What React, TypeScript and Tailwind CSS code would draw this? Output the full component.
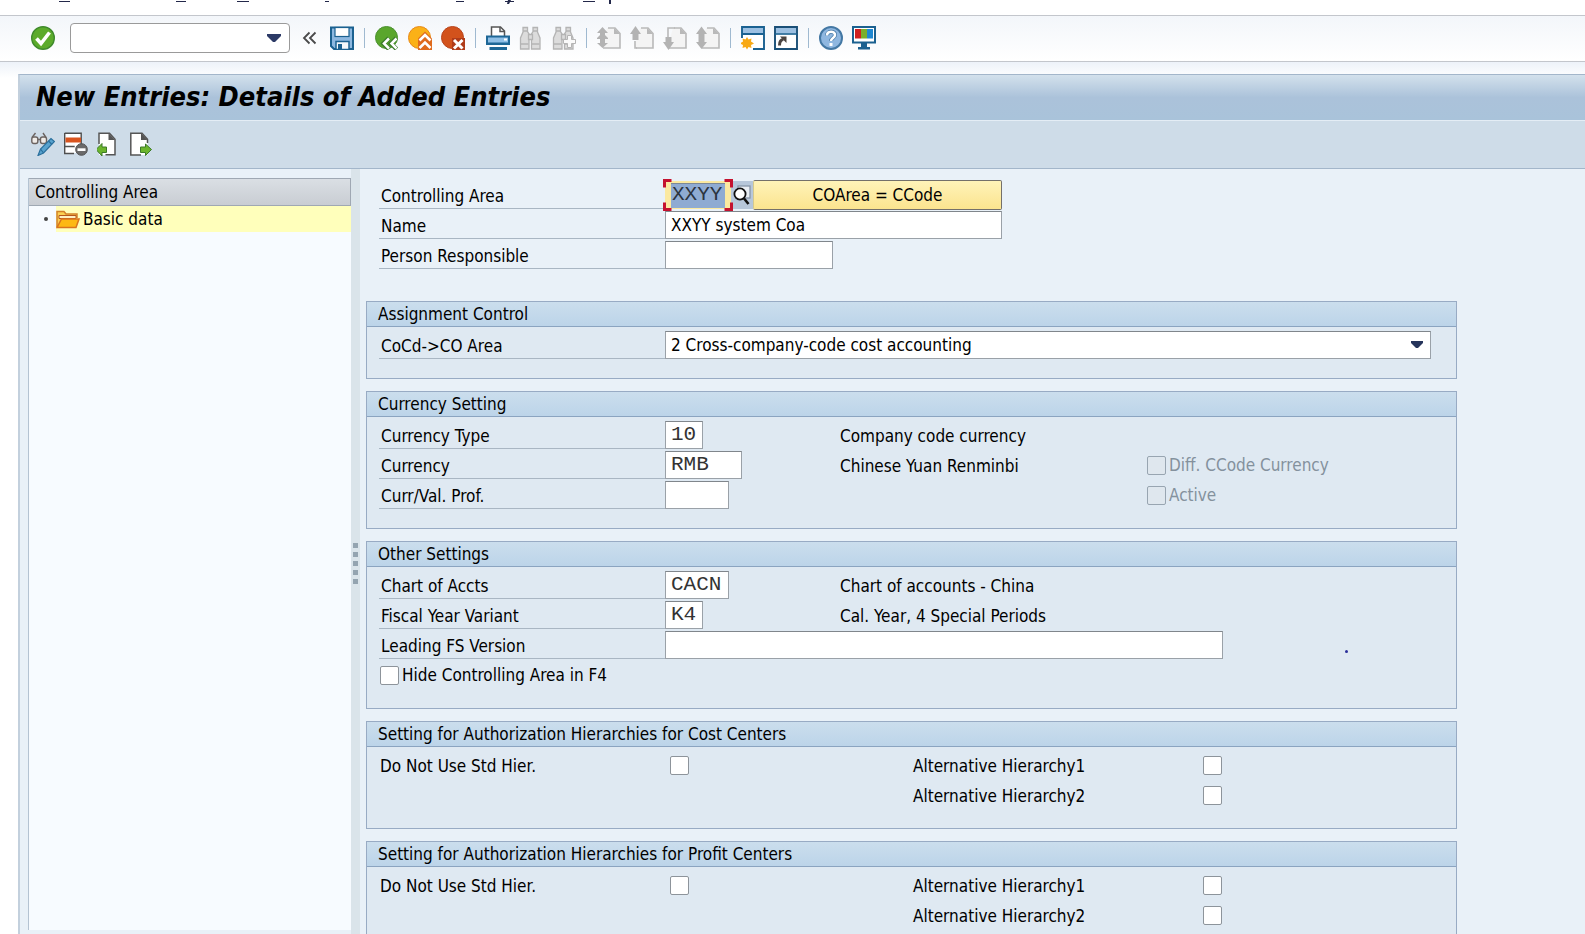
import React, { useId } from "react";

type IconProps = { children: React.ReactNode; className?: string };

function Icon({ children, className = "size-6" }: IconProps) {
  return (
    <svg viewBox="0 0 24 24" className={className} aria-hidden="true">
      {children}
    </svg>
  );
}

function ToolButton({ label, disabled, children }: { label: string; disabled?: boolean; children: React.ReactNode }) {
  return (
    <button type="button" aria-label={label} disabled={disabled} className="size-6 shrink-0">
      <Icon>{children}</Icon>
    </button>
  );
}

function Separator() {
  return <span className="mx-px h-5 w-px shrink-0 bg-[#9fb9d0]" />;
}

function MenuEdge() {
  return (
    <svg className="h-4 w-full shrink-0 border-b border-[#c3c6cc] bg-white" aria-hidden="true">
      <g fill="#23284a">
        <rect x="59" y="1" width="11" height="1" />
        <rect x="176" y="1" width="10" height="1" />
        <rect x="237" y="1" width="12" height="1" />
        <rect x="325" y="1" width="4" height="1" />
        <rect x="456" y="1" width="8" height="1" />
        <rect x="505" y="1" width="9" height="1" />
        <path d="M508 0h3l-2 4h-2z" />
        <rect x="583" y="1" width="12" height="1" />
        <rect x="609" y="0" width="2" height="4" />
      </g>
    </svg>
  );
}

function Binoculars() {
  return (
    <g fill="#dcdcdc" stroke="#b4b4b4" strokeWidth="1.3">
      <path d="M4 1.500h4.500v4L10 8v15H1.500V12L4 6z" />
      <path d="M14 1.500h4.500V6L21 12v11h-8.500V8L14 5.500z" />
      <path d="M9.500 8.500h4v5h-4zM4 5h4.500M14 5h4.500M2 18h7.500M13 18h7.500" />
    </g>
  );
}

function PageShape() {
  return (
    <g>
      <path d="M10 2h8l5 5v15H5v-3" fill="#f4f4f4" stroke="none" />
      <path d="M11 2h7l5 5.500v14.500H6" fill="none" stroke="#b9b9b9" strokeWidth="1.600" />
      <path d="M17 2v6h6z" fill="#b9b9b9" />
    </g>
  );
}

const arrowFill = "#b3b3b3";

function CommandBar() {
  return (
    <div className="flex h-[46px] shrink-0 items-center gap-[9px] border-b border-[#c3c6cc] bg-linear-to-b from-[#f3f6fa] to-white pb-0.5 pl-[31px]">
      <ToolButton label="Enter">
        <circle cx="12" cy="12" r="11.300" fill="#5cab2b" stroke="#3f8a2c" strokeWidth="1.400" />
        <path d="M5.500 12.500l4.500 5 8.500-11" fill="none" stroke="#fff" strokeWidth="3.600" />
      </ToolButton>
      <div className="ml-1.5 flex h-[30px] w-[220px] shrink-0 items-center rounded-sm border border-[#9a9a9a] bg-white pr-2">
        <input aria-label="Command field" className="h-full min-w-0 flex-1 px-1.5 outline-none" />
        <button type="button" aria-label="Command history" className="h-full">
          <svg viewBox="0 0 14 8" className="h-2 w-3.5" aria-hidden="true">
            <path d="M0 0h14v2L8 8H6L0 2z" fill="#2c3a66" />
          </svg>
        </button>
      </div>
      <button type="button" aria-label="Hide command field" className="mr-1 ml-[3px] h-6 w-[15px] shrink-0">
        <svg viewBox="0 0 15 24" className="h-6 w-[15px]" aria-hidden="true">
          <path d="M7.500 6.500L2 12l5.500 5.500M13.500 6.500L8 12l5.500 5.500" fill="none" stroke="#4a4a4a" strokeWidth="1.800" />
        </svg>
      </button>
      <ToolButton label="Save">
        <path d="M1 1.500h22v21.500H4L1 20z" fill="#8db8e0" stroke="#1b6190" strokeWidth="2" />
        <rect x="5" y="1.500" width="14" height="9" fill="#fff" stroke="#1b6190" strokeWidth="1.200" />
        <rect x="6" y="15.500" width="13" height="8" fill="#f4f8fb" stroke="#1b6190" strokeWidth="1.500" />
        <rect x="8" y="18" width="4" height="5" fill="#1b6190" />
      </ToolButton>
      <Separator />
      <ToolButton label="Back">
        <circle cx="11.500" cy="11.500" r="11" fill="#5aa62c" stroke="#4b9030" />
        <path d="M14 12l-5.500 5.500L14 23M21.500 12L16 17.500l5.500 5.500" fill="none" stroke="#3b7a2a" strokeWidth="4.500" />
        <path d="M14 12.500l-5 5 5 5M21.500 12.500l-5 5 5 5" fill="none" stroke="#fff" strokeWidth="2.500" />
      </ToolButton>
      <ToolButton label="Exit">
        <circle cx="11.500" cy="11.500" r="11" fill="#fbb117" stroke="#e8891b" />
        <path d="M17 5.500l7 7V24H10V12.500z" fill="#df6a1d" />
        <path d="M11.500 14.500l5.500-5.500 5.500 5.500M11.500 22l5.500-5.500 5.500 5.500" fill="none" stroke="#fff" strokeWidth="2.600" />
      </ToolButton>
      <ToolButton label="Cancel">
        <circle cx="11.500" cy="11.500" r="11" fill="#d2521c" stroke="#b8441c" />
        <path d="M11 12h13v12H11z" fill="#b03c19" />
        <path d="M13 14l8.500 8.500M21.500 14L13 22.500" fill="none" stroke="#fff" strokeWidth="3" />
      </ToolButton>
      <Separator />
      <ToolButton label="Print">
        <path d="M5.500 11V1h9l4 4v6" fill="#fff" stroke="#555" strokeWidth="1.500" />
        <path d="M14 1v4.500h4.500" fill="none" stroke="#555" strokeWidth="1.500" />
        <path d="M1 10.500h22v7H1z" fill="#8fbfe6" stroke="#1e6796" strokeWidth="2" />
        <rect x="18" y="12.500" width="3" height="2" fill="#fff" />
        <path d="M0 18h24v1H0zM3.500 21h17.500v3H3.500z" fill="#1e6796" />
      </ToolButton>
      <ToolButton label="Find" disabled>
        <Binoculars />
      </ToolButton>
      <ToolButton label="Find next" disabled>
        <Binoculars />
        <path d="M15.500 9.500h4v4h4v4h-4v4h-4v-4h-4v-4h4z" fill="#fafafa" stroke="#b4b4b4" strokeWidth="1" />
      </ToolButton>
      <Separator />
      <ToolButton label="First page" disabled>
        <PageShape />
        <path d="M0 7l5.500-6L11 7H8v3H3V7zM0 12l5.500-5.500L11 12v1H0zM0 17l5.500 5 5.500-5H8v-4H3v4z" fill={arrowFill} />
      </ToolButton>
      <ToolButton label="Previous page" disabled>
        <PageShape />
        <path d="M5 15v7h2" stroke="#b9b9b9" strokeWidth="1.600" fill="none" />
        <path d="M0 8l5.500-8L11 8H8.500v6h-6V8z" fill={arrowFill} />
      </ToolButton>
      <ToolButton label="Next page" disabled>
        <PageShape />
        <path d="M5 12V2h7" stroke="#b9b9b9" strokeWidth="1.600" fill="none" />
        <path d="M0 16h2.500v-5h6v5H11l-5.500 8z" fill={arrowFill} />
      </ToolButton>
      <ToolButton label="Last page" disabled>
        <PageShape />
        <path d="M0 8l5.500-7.500L11 8H8.500v8H11l-5.500 7L0 16h2.500V8z" fill={arrowFill} />
      </ToolButton>
      <Separator />
      <ToolButton label="New session">
        <path d="M1 1h22v22H1z" fill="#fff" />
        <path d="M1 1h22v7H1z" fill="#9cc0e2" />
        <path d="M1 12V1h22v22H12M1 8h22" fill="none" stroke="#1a6191" strokeWidth="1.900" />
        <path d="M6 11l1.500 2.500L10.500 12.500l-.5 3 3 2-3 1.500.5 3-3-1L6 23.500 4.500 21l-3 1 .5-3-3-1.500 3-2-.5-3 3 1z" fill="#f8a915" />
      </ToolButton>
      <ToolButton label="Create shortcut">
        <path d="M1 1h22v22H1z" fill="#fff" stroke="#1a4f77" strokeWidth="1.900" />
        <path d="M2 2h20v5.500H2z" fill="#9cc0e2" />
        <path d="M1 8h22" stroke="#1a6191" strokeWidth="1.600" />
        <path d="M5.500 19.500c0-4 1.500-6 4-6" fill="none" stroke="#4b4441" strokeWidth="3" />
        <path d="M6 10.500h6.500V17z" fill="#4b4441" />
      </ToolButton>
      <Separator />
      <ToolButton label="Help">
        <circle cx="12" cy="12" r="11" fill="#8fb7e0" stroke="#4478a4" strokeWidth="2" />
        <path d="M8 9.500C8 4.500 16 4.500 16 9c0 3-4 3-4 6" fill="none" stroke="#4478a4" strokeWidth="4" />
        <path d="M8 9.500C8 4.500 16 4.500 16 9c0 3-4 3-4 6" fill="none" stroke="#fff" strokeWidth="2.600" />
        <rect x="10.500" y="17" width="3" height="3" fill="#fff" />
      </ToolButton>
      <ToolButton label="Customize local layout">
        <rect x="1" y="1" width="22" height="15.500" fill="#fff" stroke="#1b6190" strokeWidth="2" />
        <rect x="3" y="3" width="6" height="9.500" fill="#cf2020" />
        <rect x="9" y="3" width="6" height="9.500" fill="#7aae2c" />
        <rect x="15" y="3" width="6" height="9.500" fill="#1e88d2" />
        <path d="M9 17h6v4h3v2.500H6V21h3z" fill="#1b6190" />
      </ToolButton>
    </div>
  );
}

function ApplicationBar() {
  return (
    <div className="flex h-12 shrink-0 items-center gap-[9px] border-b border-[#a3b6ca] bg-[#cedce8] pb-0.5 pl-[11px]">
      <ToolButton label="Display or change">
        <g fill="none" stroke="#6b6360" strokeWidth="1.400">
          <rect x="0.800" y="5" width="6" height="6.500" rx="2" fill="#f0ece8" />
          <rect x="9.500" y="5" width="6" height="6.500" rx="2" fill="#f0ece8" />
          <path d="M6.800 7.500h2.700M1 5.500L4.500 1M15 5.500L12 1" />
        </g>
        <path d="M7 23.500l2.500-6.500L20 6.500l3.500 3L12.500 21z" fill="#58a3cf" stroke="#2a6f9c" strokeWidth="1.200" />
        <path d="M9.500 17l3 4M17.500 9l3.500 3.500" stroke="#2a6f9c" strokeWidth="1.200" />
      </ToolButton>
      <ToolButton label="Delete">
        <path d="M0 1h17v20H0z" fill="#fff" />
        <path d="M.7 1v20.500h9.300M.7 1.200h16.500v14M.7 14.500h10" fill="none" stroke="#4f4f4f" strokeWidth="1.400" />
        <path d="M1.500 5.500h15.500v5H1.500z" fill="#d9541e" />
        <circle cx="17.500" cy="17.500" r="5.800" fill="#6a6a6a" stroke="#505050" />
        <rect x="13.500" y="16.300" width="8" height="2.700" fill="#fff" />
      </ToolButton>
      <ToolButton label="Previous entry">
        <path d="M2 1.500h10l6 5.500v16H2z" fill="#fff" />
        <path d="M2 12V1.200h10.500l5.500 6v15.500h-9.500" fill="none" stroke="#555" strokeWidth="1.500" />
        <path d="M11.500 1v7H18z" fill="#555" />
        <path d="M-1 17.500L5 11.500v3.500h4.500v5.500H5v3.500z" fill="#6cb52d" stroke="#3c7a28" strokeWidth="1" />
      </ToolButton>
      <ToolButton label="Next entry">
        <path d="M.8 1.200h11.200l5.500 6V23H.8z" fill="#fff" />
        <path d="M17.500 11V7.200L12 1.200H.8V23H11" fill="none" stroke="#555" strokeWidth="1.500" />
        <path d="M11 1v7h6.500z" fill="#555" />
        <path d="M21.500 17.500L15.500 12v3h-5v5.500h5v3z" fill="#6cb52d" stroke="#3c7a28" strokeWidth="1" />
      </ToolButton>
    </div>
  );
}

function NavigationTree() {
  return (
    <nav className="mt-[9px] mb-1 ml-2 flex w-[323px] shrink-0 flex-col border-l border-[#b4c3d2] bg-[#f7fbff]">
      <h2 className="flex h-7 shrink-0 items-center border border-l-0 border-[#9fa8b3] bg-linear-to-b from-[#dadfe4] to-[#c9cdd3] pl-1.5">
        Controlling Area
      </h2>
      <ul>
        <li className="flex h-[26px] items-center">
          <span className="ml-[15px] size-1 rounded-full bg-[#444]" />
          <a href="#basic-data" className="ml-2 flex h-full flex-1 items-center gap-[3px] bg-[#ffffbb]">
            <svg viewBox="0 0 24 19" className="h-[19px] w-6" aria-hidden="true">
              <path d="M1 17V1.500h7l2 2.500h11v4" fill="#fbd052" stroke="#d2812a" strokeWidth="1.500" />
              <path d="M3 5.500h17v3H3z" fill="#fff0c0" stroke="#b5561c" strokeWidth="1" />
              <path d="M1 17.500L5.500 9H23l-3 8.500z" fill="#fdb813" stroke="#d9731f" strokeWidth="1.500" />
            </svg>
            Basic data
          </a>
        </li>
      </ul>
    </nav>
  );
}

function Splitter() {
  return (
    <div className="flex w-[9px] shrink-0 flex-col items-center justify-center gap-1 bg-[#dae4ea] pt-6">
      <span className="size-[5px] bg-[#94a4b0]" />
      <span className="size-[5px] bg-[#94a4b0]" />
      <span className="size-[5px] bg-[#94a4b0]" />
      <span className="size-[5px] bg-[#94a4b0]" />
      <span className="size-[5px] bg-[#94a4b0]" />
    </div>
  );
}

const boxBase = "h-7 max-w-full border border-[#9aa1a8] border-t-[#80868c] bg-white px-[5px] outline-none";
const monoText = "pb-0.5 font-['Liberation_Mono',monospace] text-[21px] text-[#333]";

type FieldProps = {
  label: string;
  children: (id: string) => React.ReactNode;
  description?: string;
  extra?: React.ReactNode;
};

function Field({ label, children, description, extra }: FieldProps) {
  const id = useId();
  return (
    <div className="flex h-[30px] items-end">
      <label htmlFor={id} className="flex h-7 w-[286px] shrink-0 items-center border-b border-[#a9b6c3] pt-0.5 pl-0.5">
        {label}
      </label>
      {description === undefined ? (
        children(id)
      ) : (
        <>
          <div className="flex w-[175px] shrink-0">{children(id)}</div>
          <span className="flex h-7 w-[307px] shrink-0 items-center pt-px">{description}</span>
        </>
      )}
      {extra}
    </div>
  );
}

function Checkbox({ id, disabled }: { id?: string; disabled?: boolean }) {
  return (
    <input
      id={id}
      type="checkbox"
      disabled={disabled}
      className="size-[19px] shrink-0 appearance-none rounded-xs border border-[#8d949b] bg-white checked:bg-[#4478a4] disabled:border-[#98a5b1] disabled:bg-[#dfe7ee]"
    />
  );
}

function TickRow({ label, disabled }: { label: string; disabled?: boolean }) {
  return (
    <label className={disabled ? "flex h-7 items-center gap-[3px] text-[#84919d]" : "flex h-7 items-center gap-[3px]"}>
      <Checkbox disabled={disabled} />
      {label}
    </label>
  );
}

function Group({ title, children }: { title: string; children: React.ReactNode }) {
  return (
    <section className="mb-3 border border-[#98abc4] bg-[#dfe9f2]">
      <h3 className="flex h-[25px] items-center border-b border-[#8ba4c0] bg-linear-to-b from-[#cbdeed] to-[#bcd4e9] pl-[11px]">
        {title}
      </h3>
      <div className="pt-0.5 pr-[25px] pb-[19px] pl-3">{children}</div>
    </section>
  );
}

function HierarchyGroup({ title }: { title: string }) {
  const id = useId();
  return (
    <Group title={title}>
      <div className="grid grid-cols-[291px_242px_291px_auto] justify-start">
        <label htmlFor={id + "std"} className="flex h-[30px] items-center pt-[3px] pl-px">Do Not Use Std Hier.</label>
        <span className="flex h-[30px] items-center pt-0.5"><Checkbox id={id + "std"} /></span>
        <label htmlFor={id + "a"} className="flex h-[30px] items-center pt-[3px] pl-px">Alternative Hierarchy1</label>
        <span className="flex h-[30px] items-center pt-0.5"><Checkbox id={id + "a"} /></span>
        <label htmlFor={id + "b"} className="col-start-3 flex h-[30px] items-center pt-[3px] pl-px">Alternative Hierarchy2</label>
        <span className="flex h-[30px] items-center pt-0.5"><Checkbox id={id + "b"} /></span>
      </div>
    </Group>
  );
}

function KeyField({ id }: { id: string }) {
  return (
    <div className="relative flex h-7 w-[66px] shrink-0 items-center justify-center bg-[#fbe9a0]">
      <input
        id={id}
        defaultValue="XXYY"
        className="h-[25px] w-[54px] border-t border-[#7c8896] bg-[#8fabd2] px-px pb-0.5 font-['Liberation_Mono',monospace] text-[21px] text-[#2b3440] outline-none"
      />
      <svg viewBox="0 0 70 32" className="pointer-events-none absolute -top-0.5 -left-0.5 h-8 w-[70px]" aria-hidden="true">
        <path d="M1.500 8.500v-7h7M61.500 1.500h7v7M68.500 23.500v7h-7M8.500 30.500h-7v-7" fill="none" stroke="#c4122f" strokeWidth="3" />
      </svg>
    </div>
  );
}

function EntryForm() {
  return (
    <form className="min-w-0 flex-1 pt-2.5 pr-32 pl-1.5">
      <div className="mb-8 pl-[13px]">
        <Field label="Controlling Area">
          {(id) => (
            <>
              <KeyField id={id} />
              <button type="button" aria-label="Search help" className="flex h-7 w-[22px] shrink-0 items-center justify-center bg-[#b7c7da]">
                <svg viewBox="0 0 20 22" className="h-[22px] w-5" aria-hidden="true">
                  <rect x="6" y="2" width="12" height="12" fill="#e9eef4" stroke="#8796a8" strokeWidth="1.300" />
                  <circle cx="8" cy="10" r="5.600" fill="#fff" stroke="#111" strokeWidth="1.800" />
                  <path d="M12 14.500l4.500 5.500" stroke="#111" strokeWidth="2.600" />
                </svg>
              </button>
              <button
                type="button"
                className="-mb-px h-[30px] w-[249px] rounded-xs border border-[#74706a] border-l-[#d6c98c] bg-linear-to-b from-[#fff3b8] to-[#fbe48f]"
              >
                COArea = CCode
              </button>
            </>
          )}
        </Field>
        <Field label="Name">
          {(id) => <input id={id} defaultValue="XXYY system Coa" className={`${boxBase} w-[337px]`} />}
        </Field>
        <Field label="Person Responsible">
          {(id) => <input id={id} className={`${boxBase} w-[168px]`} />}
        </Field>
      </div>

      <Group title="Assignment Control">
        <Field label="CoCd->CO Area">
          {(id) => (
            <div className="relative w-[766px] max-w-full">
              <select id={id} className={`${boxBase} block w-full appearance-none`}>
                <option>2 Cross-company-code cost accounting</option>
              </select>
              <svg viewBox="0 0 12 7" className="pointer-events-none absolute top-2.5 right-2 h-[7px] w-3" aria-hidden="true">
                <path d="M0 0h12v2L7 7H5L0 2z" fill="#26355c" />
              </svg>
            </div>
          )}
        </Field>
      </Group>

      <Group title="Currency Setting">
        <Field label="Currency Type" description="Company code currency">
          {(id) => <input id={id} defaultValue="10" className={`${boxBase} ${monoText} w-[38px]`} />}
        </Field>
        <Field
          label="Currency"
          description="Chinese Yuan Renminbi"
          extra={<TickRow label="Diff. CCode Currency" disabled />}
        >
          {(id) => <input id={id} defaultValue="RMB" className={`${boxBase} ${monoText} w-[77px]`} />}
        </Field>
        <Field label="Curr/Val. Prof." description="" extra={<TickRow label="Active" disabled />}>
          {(id) => <input id={id} className={`${boxBase} ${monoText} w-16`} />}
        </Field>
      </Group>

      <Group title="Other Settings">
        <Field label="Chart of Accts" description="Chart of accounts - China">
          {(id) => <input id={id} defaultValue="CACN" className={`${boxBase} ${monoText} w-16`} />}
        </Field>
        <Field label="Fiscal Year Variant" description="Cal. Year, 4 Special Periods">
          {(id) => <input id={id} defaultValue="K4" className={`${boxBase} ${monoText} w-[38px]`} />}
        </Field>
        <Field
          label="Leading FS Version"
          extra={<span className="mb-1.5 ml-[122px] size-[3px] rounded-full bg-[#2b2f9a]" />}
        >
          {(id) => <input id={id} className={`${boxBase} w-[558px]`} />}
        </Field>
        <div className="flex h-[30px] items-end pl-px">
          <TickRow label="Hide Controlling Area in F4" />
        </div>
      </Group>

      <HierarchyGroup title="Setting for Authorization Hierarchies for Cost Centers" />
      <HierarchyGroup title="Setting for Authorization Hierarchies for Profit Centers" />
    </form>
  );
}

export default function App() {
  return (
    <div className="flex h-screen flex-col overflow-hidden bg-white font-['DejaVu_Sans_Condensed','DejaVu_Sans',sans-serif] text-[17px] leading-5 text-black">
      <MenuEdge />
      <CommandBar />
      <div className="flex min-h-0 flex-1 flex-col bg-linear-to-b from-[#edf2f9] to-white to-[16px] pt-3">
        <main className="ml-[18px] flex min-h-0 flex-1 flex-col border-t border-l-2 border-[#a3b6ca] border-l-[#c3d0dd] bg-[#e9f1f8]">
          <h1 className="flex h-[46px] shrink-0 items-center border-b border-[#e4edf5] bg-linear-to-b from-[#d3e1ec] via-[#abc2da] to-[#a9c3da] pb-0.5 pl-4 text-[27px] leading-8 font-bold italic">
            New Entries: Details of Added Entries
          </h1>
          <ApplicationBar />
          <div className="flex min-h-0 flex-1">
            <NavigationTree />
            <Splitter />
            <EntryForm />
          </div>
        </main>
      </div>
    </div>
  );
}
